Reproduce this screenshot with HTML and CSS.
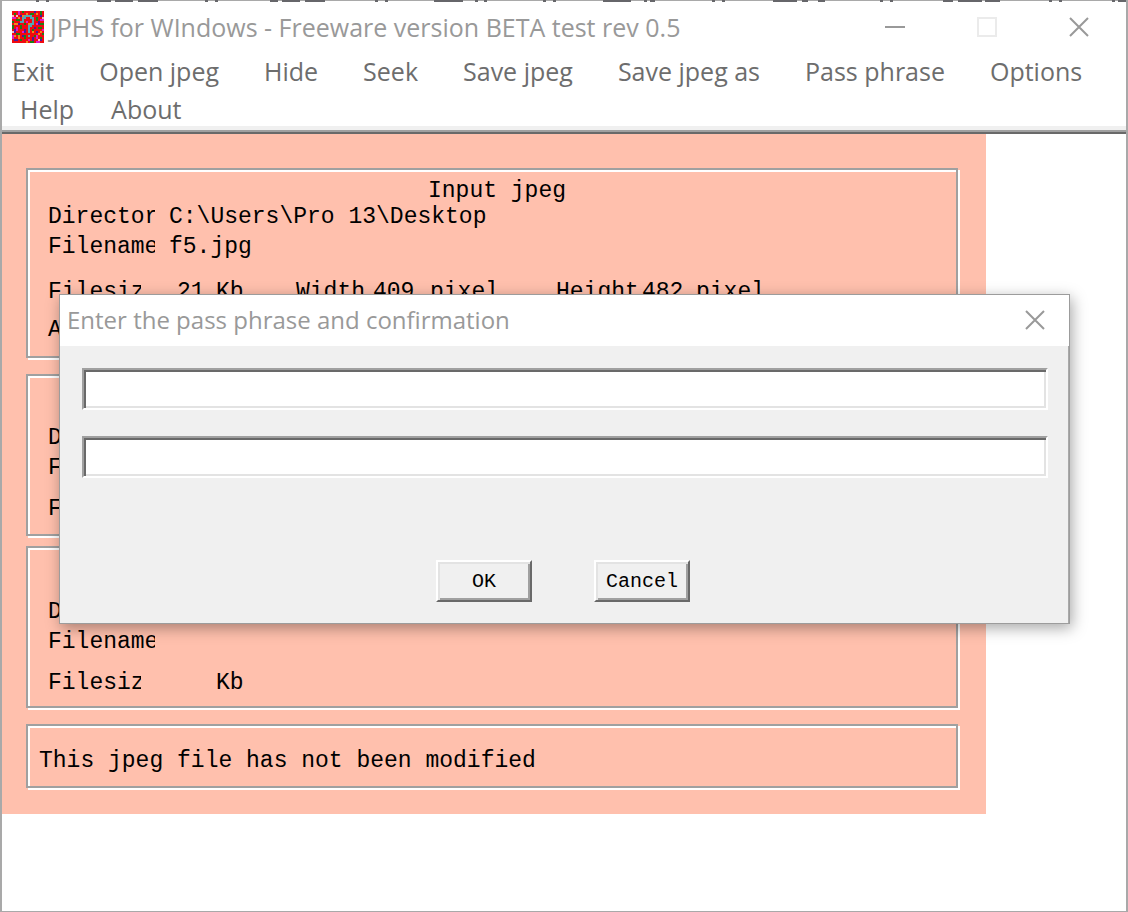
FILE: index.html
```
<!DOCTYPE html>
<html lang="en">
<head>
  <meta charset="UTF-8">
  <meta name="viewport" content="width=device-width, initial-scale=1.0">
  <title>JPHS for WIndows</title>
  <link rel="stylesheet" href="styles.css">
</head>
<body>
  <div class="window">
    <svg class="backdrop" width="1128" height="2" viewBox="0 0 1128 2" aria-hidden="true">
      <path d="M36 1h3m7 0h3M97 1h14m4 0h18m5 0h20M205 1h3m7 0h3M270 1h8m4 0h18m5 0h20M375 1h3m7 0h3M434 1h29m12 0h3m6 0h3M543 1h3m7 0h3M603 1h28m13 0h3m3 0h5M712 1h3m7 0h3M773 1h24m5 0h6m10 0h7M880 1h3m7 0h3M943 1h10m5 0h24m3 0h15M1049 1h3m7 0h3M1112 1h3m3 0h8" stroke="#66666a" stroke-width="2"/>
    </svg>

    <header class="title-bar">
      <svg class="app-icon" width="32" height="32" viewBox="0 0 16 16" aria-hidden="true">
        <rect width="16" height="16" fill="#f00a10"/>
        <path d="M1 1h1v1h-1zM5 0h1v1h-1zM9 1h2v1h-2zM14 0h1v2h-1zM2 4h2v1h-2zM12 3h1v2h-1zM0 7h1v2h-1zM4 7h1v2h-1zM13 8h2v1h-2zM2 11h2v1h-2zM6 12h1v2h-1zM11 12h2v1h-2zM14 13h1v1h-1zM4 14h1v1h-1zM9 15h2v1h-2zM6 6h1v1h-1zM14 6h2v1h-2zM0 5h1v1h-1zM10 9h1v1h-1zM15 11h1v1h-1z" fill="#1f7d12"/>
        <path d="M3 0h1v2h-1zM0 3h2v1h-2zM14 4h2v1h-2zM2 8h1v2h-1zM12 6h1v1h-1zM5 10h1v1h-1zM0 12h1v2h-1zM8 14h1v1h-1zM12 15h2v1h-2zM12 12h1v2h-1zM15 9h1v1h-1zM7 5h1v1h-1z" fill="#e01ac8"/>
        <path d="M7 1h1v1h-1zM3 3h1v1h-1zM1 6h2v1h-2zM10 10h1v1h-1zM14 10h1v1h-1zM3 12h1v2h-1zM7 15h1v1h-1zM12 1h1v1h-1zM5 2h1v1h-1zM8 6h1v1h-1zM13 11h1v1h-1zM1 12h1v1h-1z" fill="#ee8a1c"/>
        <path d="M11 0h1v1h-1zM13 5h1v2h-1zM1 9h1v2h-1zM5 5h1v1h-1zM12 10h1v1h-1zM1 14h2v1h-2zM10 13h1v2h-1zM6 9h1v2h-1zM11 8h1v1h-1zM14 2h1v1h-1zM4 2h1v1h-1zM14 14h1v1h-1zM3 6h1v1h-1zM5 12h1v1h-1z" fill="#4a18a0"/>
        <path d="M4 5h2v1h-2zM5 3h1v2h-1zM6 2h1v2h-1zM7 2h2v1h-2zM9 2h1v2h-1zM10 3h1v4h-1zM9 6h1v2h-1zM8 7h1v4h-1zM8 12h1v1h-1z" fill="#52a8b4"/>
        <path d="M0 2h1v1h-1zM2 2h1v1h-1zM0 10h1v1h-1zM15 3h1v1h-1zM13 14h1v1h-1z" fill="#f6b8c0"/>
      </svg>
      <h1>JPHS for WIndows - Freeware version BETA test rev 0.5</h1>
      <div class="window-controls">
        <button type="button" aria-label="Minimize"><svg width="20" height="20" viewBox="0 0 20 20"><path d="M0 10h20" stroke="#999" stroke-width="2"/></svg></button>
        <button type="button" aria-label="Maximize" disabled><svg width="20" height="20" viewBox="0 0 20 20"><path d="M1 1h18v18h-18z" fill="none" stroke="#ebebeb" stroke-width="2"/></svg></button>
        <button type="button" aria-label="Close"><svg width="20" height="20" viewBox="0 0 20 20"><path d="M1 1l18 18M19 1l-18 18" stroke="#999" stroke-width="2"/></svg></button>
      </div>
    </header>

    <nav class="menu-bar">
      <button type="button">Exit</button>
      <button type="button">Open jpeg</button>
      <button type="button">Hide</button>
      <button type="button">Seek</button>
      <button type="button">Save jpeg</button>
      <button type="button">Save jpeg as</button>
      <button type="button">Pass phrase</button>
      <button type="button">Options</button>
      <button type="button" class="help">Help</button>
      <button type="button">About</button>
    </nav>

    <main class="panel">
      <section class="frame input-frame">
        <h2>Input jpeg</h2>
        <div class="row"><span class="label">Directory</span><span>C:\Users\Pro 13\Desktop</span></div>
        <div class="row"><span class="label">Filename</span><span>f5.jpg</span></div>
        <div class="row sizes">
          <span class="label">Filesize</span><span>21</span><span>Kb</span>
          <span>Width</span><span>409</span><span>pixel</span>
          <span>Height</span><span>482</span><span>pixel</span>
        </div>
        <div class="row capacity"><span>A</span></div>
      </section>

      <section class="frame hidden-frame">
        <div class="row"><span>D</span></div>
        <div class="row"><span>F</span></div>
        <div class="row sizes"><span>F</span></div>
      </section>

      <section class="frame saved-frame">
        <div class="row"><span>D</span></div>
        <div class="row"><span class="label">Filename</span></div>
        <div class="row sizes"><span class="label">Filesize</span><span></span><span>Kb</span></div>
      </section>

      <section class="frame status-frame">
        <p>This jpeg file has not been modified</p>
      </section>
    </main>

    <form class="dialog" role="dialog" aria-labelledby="dialogTitle">
      <div class="dialog-title">
        <h2 id="dialogTitle">Enter the pass phrase and confirmation</h2>
        <button type="button" aria-label="Close"><svg width="20" height="20" viewBox="0 0 20 20"><path d="M1 1l18 18M19 1l-18 18" stroke="#999" stroke-width="2"/></svg></button>
      </div>
      <div class="dialog-body">
        <input type="password" aria-label="Pass phrase">
        <input type="password" aria-label="Confirm pass phrase">
        <div class="dialog-buttons">
          <button type="button">OK</button>
          <button type="button">Cancel</button>
        </div>
      </div>
    </form>
  </div>
</body>
</html>
```
FILE: styles.css
```
:root {
  --edge: #a9a9a9;
  --face: #f0f0f0;
  --shade: #a0a0a0;
  --dark: #696969;
  --light: #e3e3e3;
  --panel: #ffc0ad;
  --ui-font: "Open Sans", "Noto Sans", sans-serif;
  --mono-font: "Liberation Mono", monospace;
}

* {
  box-sizing: border-box;
}

body {
  margin: 0;
  background-color: white;
}

h1, h2, p {
  margin: 0;
  font-weight: normal;
}

button {
  padding: 0;
  border: none;
  background: none;
}

svg {
  display: block;
}

.window {
  position: relative;
  min-height: 100vh;
  border: 1px solid var(--edge);
  border-width: 1px 2px;
}

.backdrop {
  position: absolute;
  top: -1px;
  left: -2px;
  width: calc(100% + 4px);
}

/* Title bar */
.title-bar {
  display: flex;
  align-items: center;
  height: 51px;
  padding: 1px 37px 0 10px;
  font-family: var(--ui-font);
  color: #999;
}

.title-bar h1 {
  flex: 1;
  margin-left: 6px;
  font-size: 25px;
  line-height: 36px;
  white-space: nowrap;
}

.window-controls {
  display: flex;
  gap: 72px;
}

/* Menu bar */
.menu-bar {
  display: flex;
  flex-wrap: wrap;
  column-gap: 45px;
  padding: 0 10px 4px;
  border-bottom: 2px solid var(--dark);
  box-shadow: inset 0 -2px var(--shade), inset 0 -6px var(--face);
}

.menu-bar button {
  font-family: var(--ui-font);
  font-size: 25px;
  line-height: 38px;
  color: #6d6d6d;
  white-space: nowrap;
}

.menu-bar .help {
  margin: 0 -8px 0 8px;
}

/* File details */
.panel {
  margin-right: 140px;
  padding: 34px 28px 24px 24px;
  background-color: var(--panel);
  font-family: var(--mono-font);
  font-size: 23px;
  line-height: 26px;
  color: black;
}

.frame {
  border: 2px solid var(--shade);
  box-shadow: inset 2px 2px white, 2px 2px white;
  padding-left: 20px;
}

.frame h2 {
  padding-right: 10px;
  font-size: 23px;
  text-align: center;
}

.row {
  display: grid;
  grid-template-columns: 107px auto;
  column-gap: 14px;
  justify-content: start;
  margin-bottom: 4px;
  white-space: nowrap;
}

.label {
  overflow: hidden;
}

.sizes {
  grid-template-columns: 129px 39px 80px 77px 57px 126px 86px 54px auto;
  column-gap: 0;
  margin-top: 15px;
}

.sizes .label {
  width: 93px;
}

.input-frame {
  height: 190px;
  padding-top: 8px;
}

.input-frame .sizes {
  margin-top: 19px;
}

.capacity {
  margin-top: 12px;
}

.hidden-frame {
  height: 162px;
  margin-top: 16px;
  padding-top: 49px;
}

.saved-frame {
  height: 162px;
  margin-top: 10px;
  padding-top: 51px;
}

.status-frame {
  margin-top: 16px;
  margin-bottom: 2px;
  padding: 22px 0 12px 11px;
}

/* Pass phrase dialog */
.dialog {
  position: absolute;
  top: 293px;
  left: 57px;
  right: 56px;
  border: 1px solid rgba(0, 0, 0, 0.35);
  background-color: var(--face);
  box-shadow: 2px 4px 14px rgba(0, 0, 0, 0.35);
}

.dialog-title {
  display: flex;
  align-items: center;
  justify-content: space-between;
  height: 51px;
  padding: 0 24px 2px 7px;
  background-color: white;
  color: #999;
}

.dialog-title h2 {
  font-family: var(--ui-font);
  font-size: 24px;
  line-height: 36px;
}

.dialog-body {
  display: flex;
  flex-direction: column;
  gap: 26px;
  padding: 22px 20px 21px 22px;
  border-right: 1px solid var(--edge);
}

.dialog-body input {
  width: 100%;
  height: 42px;
  padding: 0 8px;
  border: 2px solid;
  border-color: var(--shade) white white var(--shade);
  box-shadow: inset 2px 2px var(--dark), inset -2px -2px var(--light);
  font-family: var(--mono-font);
  font-size: 20px;
}

.dialog-buttons {
  display: flex;
  justify-content: center;
  gap: 62px;
  margin-top: 56px;
  padding-right: 4px;
}

.dialog-buttons button {
  width: 96px;
  height: 42px;
  border: 2px solid;
  border-color: white var(--dark) var(--dark) white;
  box-shadow: inset 2px 2px var(--light), inset -2px -2px var(--shade);
  font-family: var(--mono-font);
  font-size: 20px;
  color: black;
}
```
